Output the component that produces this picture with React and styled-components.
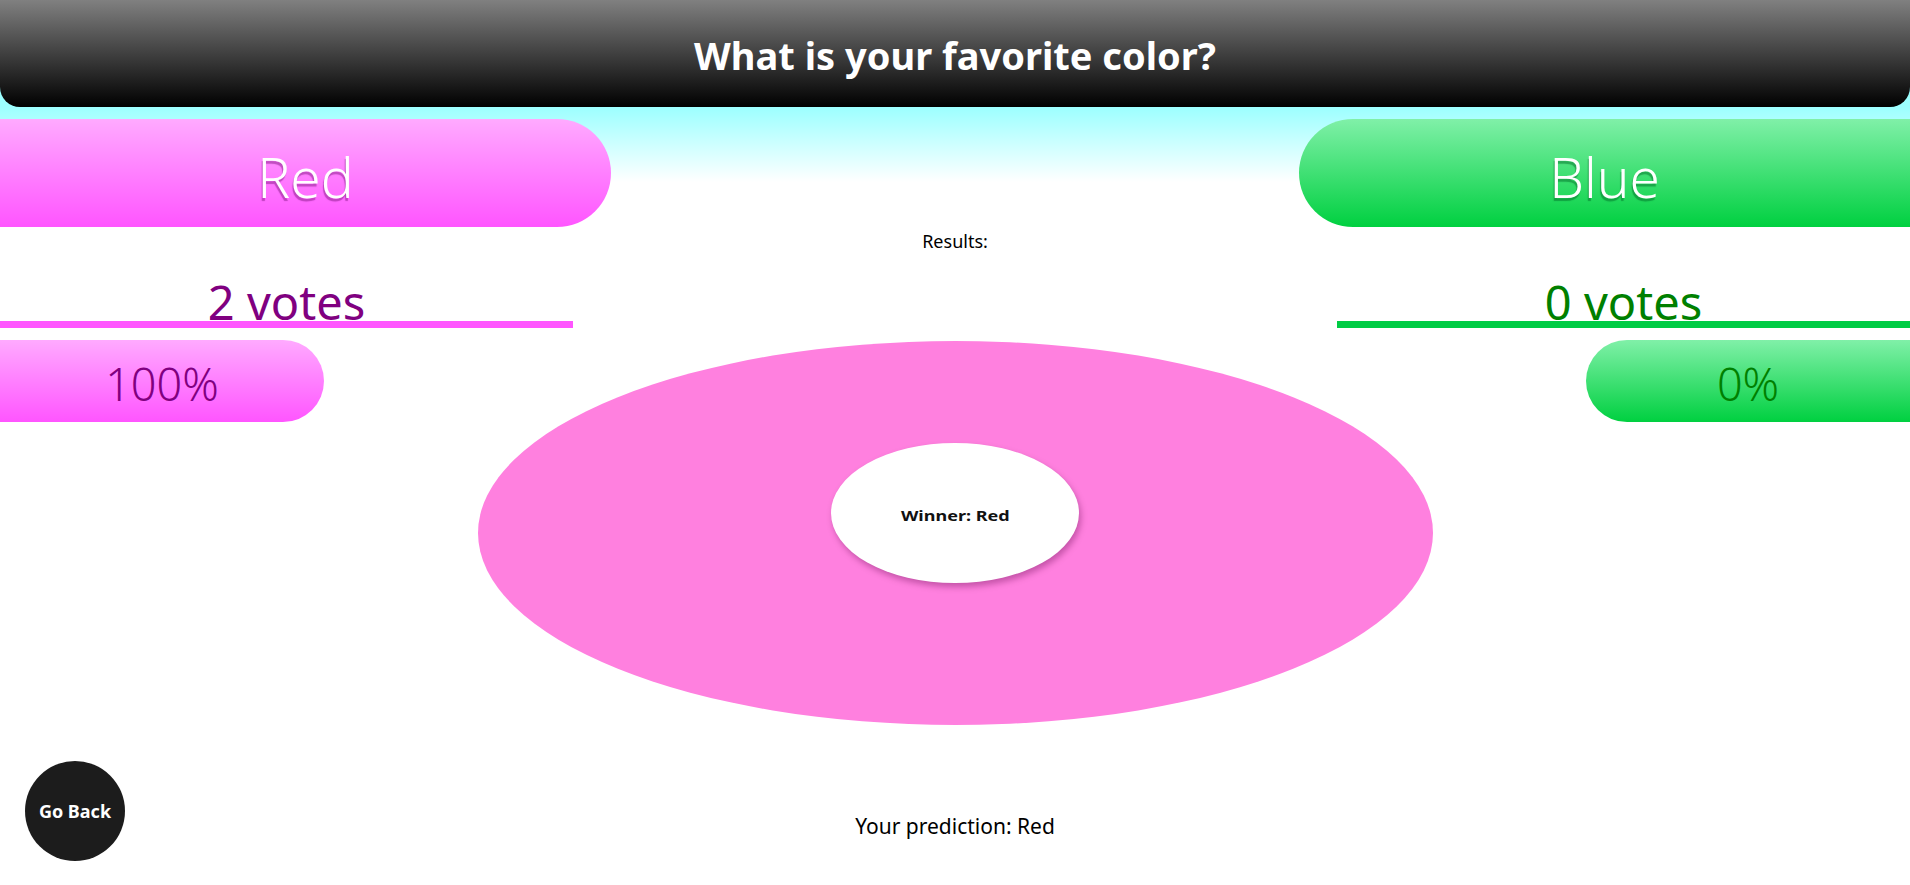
import React from "react";
import styled, { createGlobalStyle } from "styled-components";

const GlobalStyle = createGlobalStyle`
  html, body {
    margin: 0;
    padding: 0;
  }
  body {
    min-height: 885px;
    font-family: "Segoe UI", "Noto Sans", "Open Sans", sans-serif;
    background: linear-gradient(to bottom, #9cffff 0px, #9cffff 107px, #ffffff 182px) no-repeat, #ffffff;
    overflow: hidden;
  }
`;

const theme = {
  red: {
    pill: "linear-gradient(to bottom, #ffaaff, #ff55ff)",
    bar: "#ff55ff",
    text: "#800080",
    shadow: "rgba(140, 30, 140, 0.55)",
  },
  blue: {
    pill: "linear-gradient(to bottom, #80f0a8, #00d040)",
    bar: "#00cc44",
    text: "#008000",
    shadow: "rgba(0, 110, 40, 0.5)",
  },
};

const Page = styled.div`
  display: flex;
  flex-direction: column;
  height: 885px;
`;

const Header = styled.header`
  height: 107px;
  display: flex;
  align-items: center;
  justify-content: center;
  background: linear-gradient(to bottom, #808080, #000000);
  border-radius: 0 0 20px 20px;
`;

const Title = styled.h1`
  margin: 0;
  color: #ffffff;
  font-size: 38px;
  font-weight: 700;
  padding-top: 2px;
`;

const Row = styled.div`
  display: flex;
  justify-content: space-between;
  align-items: flex-start;
  margin-top: ${(p) => p.$gap || 0}px;
`;

const OptionButton = styled.button`
  width: 611px;
  height: 108px;
  border: none;
  padding: 6px 0 0;
  background: ${(p) => theme[p.$side].pill};
  border-radius: ${(p) => (p.$side === "red" ? "0 54px 54px 0" : "54px 0 0 54px")};
  color: #ffffff;
  font-family: inherit;
  font-size: 55px;
  font-weight: 300;
  text-shadow: -1px 3px 1px ${(p) => theme[p.$side].shadow};
  cursor: pointer;
`;

const ResultsLabel = styled.div`
  text-align: center;
  font-size: 18px;
  color: #000000;
  margin-top: 2px;
  height: 25px;
`;

const VoteBlock = styled.div`
  width: 573px;
  display: flex;
  flex-direction: column;
  align-items: center;
`;

const VoteCount = styled.div`
  font-size: 47px;
  line-height: 40px;
  color: ${(p) => theme[p.$side].text};
  position: relative;
  top: 1px;
`;

const VoteBar = styled.div`
  align-self: stretch;
  height: 7px;
  background: ${(p) => theme[p.$side].bar};
`;

const PercentPill = styled.div`
  width: 324px;
  height: 82px;
  box-sizing: border-box;
  padding-top: 5px;
  display: flex;
  align-items: center;
  justify-content: center;
  background: ${(p) => theme[p.$side].pill};
  border-radius: ${(p) => (p.$side === "red" ? "0 41px 41px 0" : "41px 0 0 41px")};
  color: ${(p) => theme[p.$side].text};
  font-size: 45px;
  font-weight: 300;
`;

const Donut = styled.div`
  width: 955px;
  height: 384px;
  margin-top: 1px;
  border-radius: 50%;
  background: #ff80df;
  display: flex;
  align-items: center;
  justify-content: center;
`;

const DonutHole = styled.div`
  width: 248px;
  height: 140px;
  margin-bottom: 40px;
  border-radius: 50%;
  background: #ffffff;
  box-shadow: 2px 4px 6px rgba(90, 0, 70, 0.35);
  display: flex;
  align-items: center;
  justify-content: center;
`;

const Winner = styled.span`
  font-size: 15px;
  font-weight: 700;
  color: #111111;
  transform: scaleX(1.2);
  margin-top: 4px;
`;

const Footer = styled.div`
  display: grid;
  grid-template-columns: 1fr auto 1fr;
  margin-top: 36px;
`;

const BackButton = styled.button`
  justify-self: start;
  width: 100px;
  height: 100px;
  margin-left: 25px;
  border: none;
  border-radius: 50%;
  background: #1c1c1c;
  color: #ffffff;
  font-family: inherit;
  font-size: 18px;
  font-weight: 700;
  cursor: pointer;
`;

const Prediction = styled.div`
  align-self: end;
  margin-bottom: 21px;
  font-size: 21px;
  color: #000000;
`;

const options = [
  { side: "red", name: "Red", votes: 2, pct: "100%" },
  { side: "blue", name: "Blue", votes: 0, pct: "0%" },
];

export default function App() {
  const [red, blue] = options;
  return (
    <>
      <GlobalStyle />
      <Page>
        <Header>
          <Title>What is your favorite color?</Title>
        </Header>

        <Row $gap={12}>
          {options.map((o) => (
            <OptionButton key={o.side} $side={o.side}>
              {o.name}
            </OptionButton>
          ))}
        </Row>

        <ResultsLabel>Results:</ResultsLabel>

        <Row $gap={27}>
          {options.map((o) => (
            <VoteBlock key={o.side}>
              <VoteCount $side={o.side}>{o.votes} votes</VoteCount>
              <VoteBar $side={o.side} />
            </VoteBlock>
          ))}
        </Row>

        <Row $gap={12}>
          <PercentPill $side="red">{red.pct}</PercentPill>
          <Donut>
            <DonutHole>
              <Winner>Winner: Red</Winner>
            </DonutHole>
          </Donut>
          <PercentPill $side="blue">{blue.pct}</PercentPill>
        </Row>

        <Footer>
          <BackButton>Go Back</BackButton>
          <Prediction>Your prediction: Red</Prediction>
        </Footer>
      </Page>
    </>
  );
}
